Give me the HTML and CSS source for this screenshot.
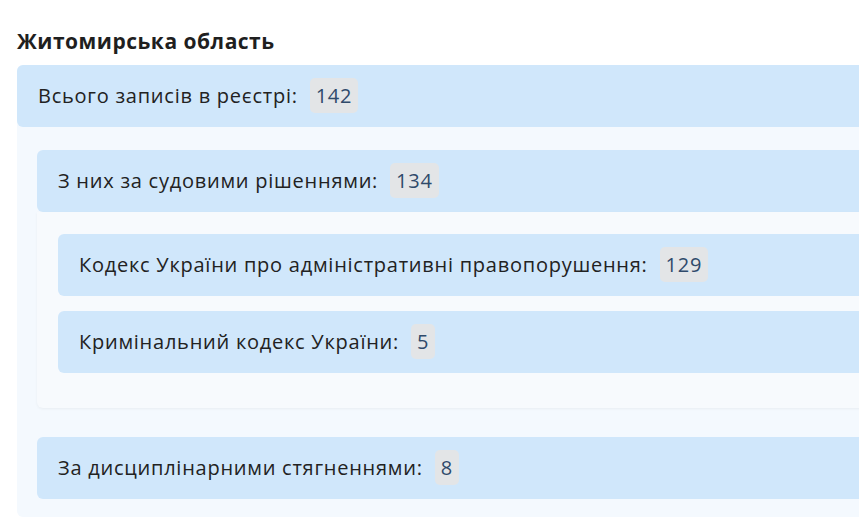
FILE: index.html
```html
<!DOCTYPE html>
<html lang="uk">
<head>
    <meta charset="UTF-8">
    <meta name="viewport" content="width=device-width, initial-scale=1.0">
    <title>Житомирська область</title>
    <link rel="stylesheet" href="styles.css">
</head>
<body>
    <div class="region">
        <h2 class="region-title">Житомирська область</h2>
        <div class="group">
            <div class="row">Всього записів в реєстрі: <span class="count">142</span></div>
            <div class="children">
                <div class="group nested">
                    <div class="row">З них за судовими рішеннями: <span class="count">134</span></div>
                    <div class="children panel">
                        <div class="row">Кодекс України про адміністративні правопорушення: <span class="count">129</span></div>
                        <div class="row">Кримінальний кодекс України: <span class="count">5</span></div>
                    </div>
                </div>
                <div class="row">За дисциплінарними стягненнями: <span class="count">8</span></div>
            </div>
        </div>
    </div>
</body>
</html>
```

FILE: styles.css
```css
body {
    margin: 0;
    padding: 0 0 0 17px;
    font-family: "Open Sans", "Noto Sans", sans-serif;
    color: #222;
    background: #fff;
    overflow: hidden;
}
.region {
    width: 900px;
}
.region-title {
    font-size: 21px;
    letter-spacing: 0.5px;
    font-weight: bold;
    color: #1f1f1f;
    margin: 0;
    padding-top: 28px;
    line-height: 27px;
    height: 37px;
}
.group {
    background: #f4f9fe;
    border-radius: 6px;
}
.row {
    background: #d0e7fb;
    border-radius: 6px;
    padding: 13px 21px;
    font-size: 20px;
    letter-spacing: 0.75px;
    line-height: 36px;
    white-space: nowrap;
}
.count {
    display: inline-block;
    background: #e3e5e7;
    color: #2f4a6b;
    border-radius: 5px;
    padding: 0 6px;
    margin-left: 6px;
    line-height: 35px;
}
.children {
    padding: 23px 0 18px 20px;
    display: flex;
    flex-direction: column;
    gap: 29px;
}
.nested {
    background: transparent;
}
.panel {
    padding: 22px 0 35px 21px;
    gap: 15px;
    background: #f7fafd;
    box-shadow: 0 1px 3px rgba(0, 0, 0, 0.05);
    border-radius: 0 0 6px 6px;
}
```
